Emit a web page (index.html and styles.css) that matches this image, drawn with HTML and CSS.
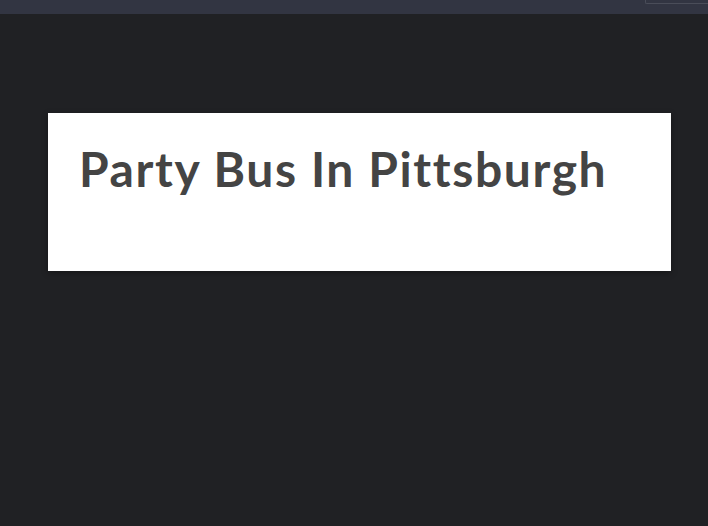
FILE: index.html
```html
<!DOCTYPE html>
<html lang="en">
<head>
    <meta charset="UTF-8">
    <meta name="viewport" content="width=device-width, initial-scale=1.0">
    <title>Party Bus In Pittsburgh</title>
    <link rel="stylesheet" href="styles.css">
</head>
<body>
    <!-- Top toolbar -->
    <div class="top-bar">
        <div class="search-box"></div>
    </div>

    <!-- Title card -->
    <div class="page">
        <div class="title-card">
            <h1 class="title">Party Bus In Pittsburgh</h1>
        </div>
    </div>
</body>
</html>
```

FILE: styles.css
```css
/* General Styles */
body {
    font-family: 'Lato', 'Open Sans', sans-serif;
    margin: 0;
    padding: 0;
    background-color: #202124;
    color: #444;
    min-height: 526px;
}

/* Top bar */
.top-bar {
    height: 14px;
    background-color: #323542;
    display: flex;
    justify-content: flex-end;
}

.search-box {
    width: 62px;
    height: 3px;
    border-left: 1px solid #4a4d59;
    border-bottom: 1px solid #4a4d59;
    border-bottom-left-radius: 2px;
}

/* Card */
.page {
    padding: 99px 37px 0 48px;
}

.title-card {
    background-color: #fff;
    height: 158px;
    box-sizing: border-box;
    padding: 28px 31px;
    box-shadow: 0 2px 6px rgba(0, 0, 0, 0.35);
}

.title {
    margin: 0;
    font-size: 48px;
    font-weight: 700;
    line-height: 56px;
    letter-spacing: 1.6px;
    color: #444;
}
```
